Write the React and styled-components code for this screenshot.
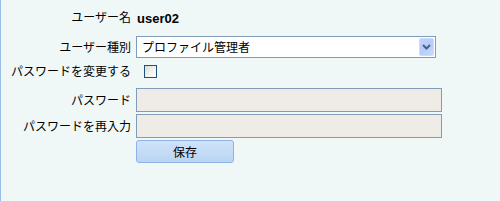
import React from 'react';
import styled, { createGlobalStyle } from 'styled-components';

const GlobalStyle = createGlobalStyle`
    html, body {
        margin: 0;
        padding: 0;
        background: #eff7f7;
    }
    body {
        font-family: "Noto Sans CJK JP", "Liberation Sans", sans-serif;
        font-size: 12px;
        color: #000;
    }
`;

const Panel = styled.section`
    box-sizing: border-box;
    width: 500px;
    height: 201px;
    border-left: 1px solid #98bfea;
    background: #eff7f7;
    padding-top: 6px;
    display: flex;
    flex-direction: column;
`;

const Row = styled.div`
    display: grid;
    grid-template-columns: 130px 1fr;
    column-gap: 5px;
    align-items: ${(p) => p.$align || 'center'};
    height: ${(p) => p.$h}px;
    margin-bottom: ${(p) => (p.$mb === undefined ? 2 : p.$mb)}px;
`;

const Label = styled.div`
    text-align: right;
    white-space: nowrap;
    line-height: 14px;
`;

const UserName = styled.span`
    font-family: "Liberation Sans", sans-serif;
    font-weight: bold;
    font-size: 13px;
    margin-left: 1px;
`;

const SelectBox = styled.div`
    box-sizing: border-box;
    width: 300px;
    height: 22px;
    background: #fff;
    border: 1px solid #7f9db9;
    display: flex;
    align-items: center;
    padding: 0 1px 0 5px;

    span {
        flex: 1;
        line-height: 14px;
    }
`;

const ArrowButton = styled.div`
    width: 15px;
    height: 18px;
    border-radius: 2px;
    background: linear-gradient(135deg, #c0d4fb 0%, #b6cdfa 50%, #c6dafc 100%);
    border: 1px solid #cbdcfb;
    box-sizing: border-box;
    display: flex;
    align-items: center;
    justify-content: center;
`;

const Checkbox = styled.span`
    box-sizing: border-box;
    display: block;
    width: 13px;
    height: 13px;
    margin-left: 8px;
    margin-top: 5px;
    border: 1px solid #1c5180;
    background: linear-gradient(135deg, #dcdcd7 0%, #f4f4f0 60%, #ffffff 100%);
`;

const TextInput = styled.input`
    box-sizing: border-box;
    width: 306px;
    height: ${(p) => p.$h || 24}px;
    margin: 0;
    background: #efebe7;
    border: 1px solid #7f9db9;
    outline: none;
    padding: 0 4px;
`;

const SaveButton = styled.button`
    box-sizing: border-box;
    width: 98px;
    height: 23px;
    margin: 0;
    padding: 0;
    border: 1px solid #8db4ea;
    border-radius: 3px;
    background: linear-gradient(180deg, #cfe2f8 0%, #c3dbf5 60%, #b9d4f2 100%);
    font-family: "Noto Sans CJK JP", sans-serif;
    font-size: 12px;
    color: #000;
    line-height: 14px;
`;

const App = () => {
    return (
        <>
            <GlobalStyle />
            <Panel>
                <Row $h={22} $mb={8}>
                    <Label>ユーザー名</Label>
                    <div><UserName>user02</UserName></div>
                </Row>
                <Row $h={22}>
                    <Label>ユーザー種別</Label>
                    <SelectBox>
                        <span>プロファイル管理者</span>
                        <ArrowButton>
                            <svg width="9" height="6" viewBox="0 0 9 6">
                                <path d="M1 1 L4.5 4.5 L8 1" stroke="#4d6185" strokeWidth="2" fill="none" />
                            </svg>
                        </ArrowButton>
                    </SelectBox>
                </Row>
                <Row $h={26} $align="start">
                    <Label style={{ marginTop: 4 }}>パスワードを変更する</Label>
                    <div><Checkbox /></div>
                </Row>
                <Row $h={24}>
                    <Label>パスワード</Label>
                    <TextInput type="password" />
                </Row>
                <Row $h={24}>
                    <Label>パスワードを再入力</Label>
                    <TextInput type="password" />
                </Row>
                <Row $h={23}>
                    <div />
                    <div><SaveButton>保存</SaveButton></div>
                </Row>
            </Panel>
        </>
    );
};

export default App;
